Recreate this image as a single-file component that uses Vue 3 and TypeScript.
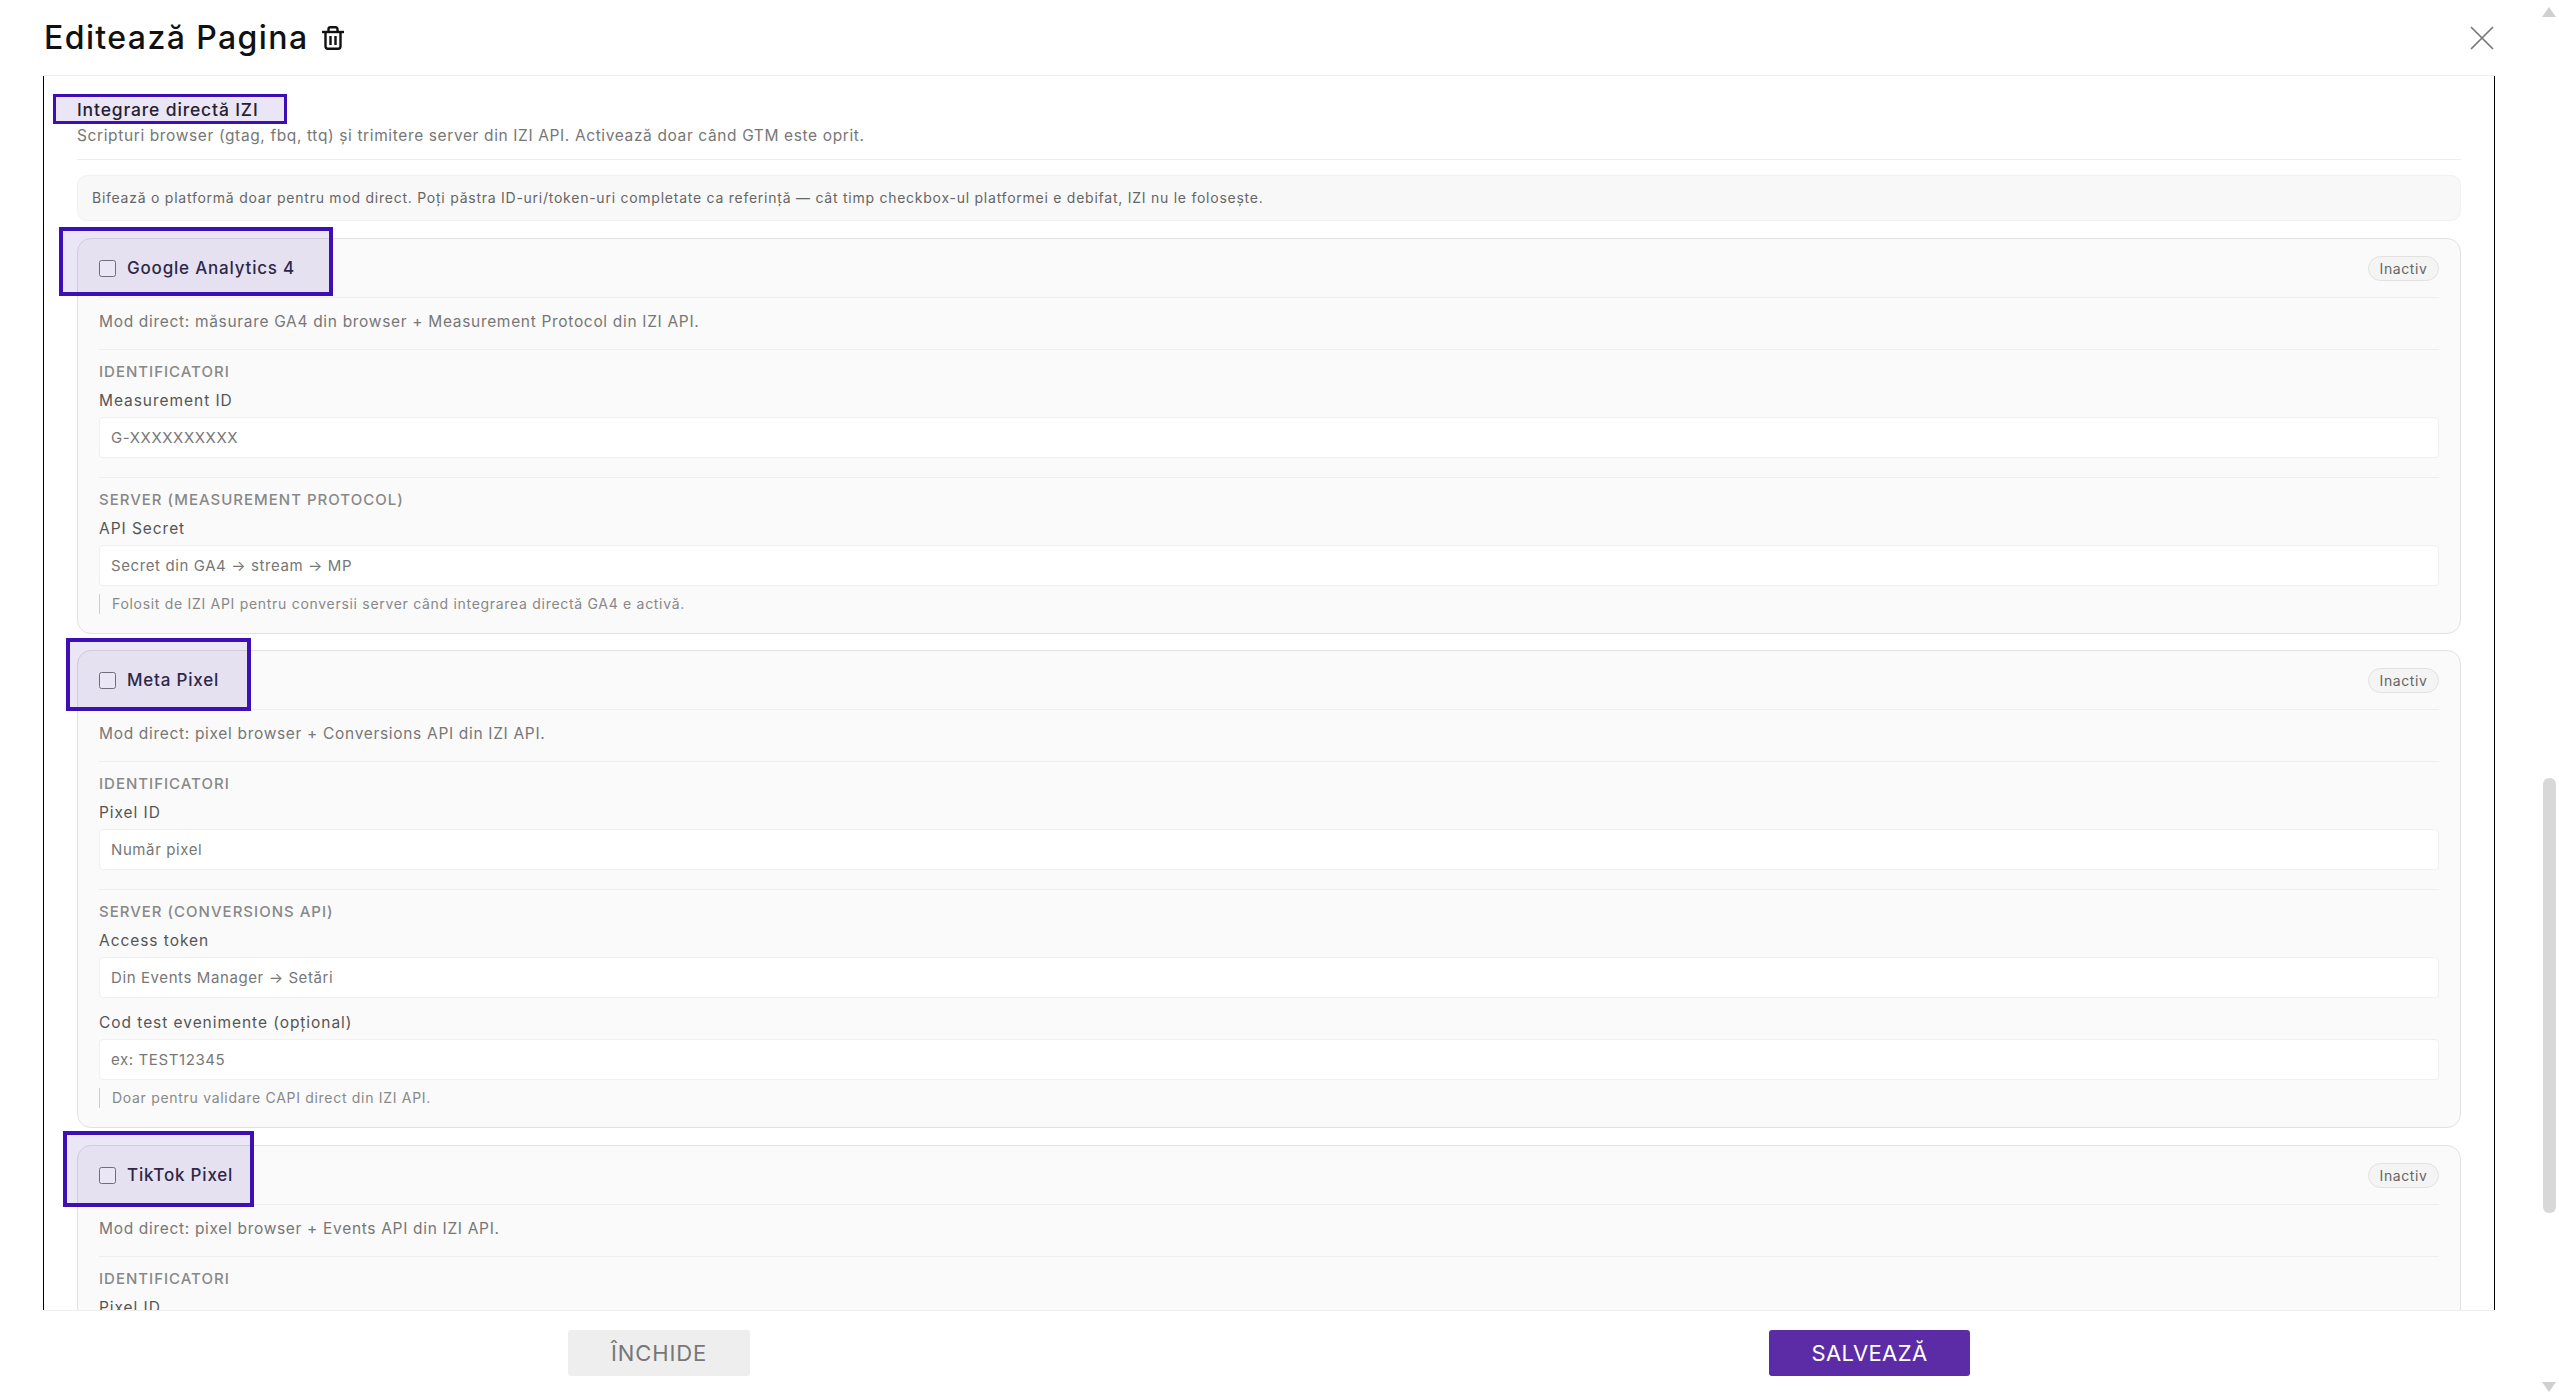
<template>
  <div class="page">
    <div class="modal">
      <header class="modal-head">
        <h1 class="modal-title">Editează Pagina</h1>
        <svg class="trash" viewBox="0 0 22 24" width="22" height="24" fill="none" stroke="#111" stroke-width="2.4">
          <path d="M0 6h22" />
          <path d="M6.5 6V3a1.8 1.8 0 0 1 1.8-1.8h5.4A1.8 1.8 0 0 1 15.5 3v3" />
          <path d="M3.5 6v14.3a2.5 2.5 0 0 0 2.5 2.5h10a2.5 2.5 0 0 0 2.5-2.5V6" />
          <path d="M8.5 10v9M13.5 10v9" />
        </svg>
        <svg class="close" viewBox="0 0 24 24" width="24" height="24">
          <path d="M1 1l22 22M23 1L1 23" stroke="#777" stroke-width="1.7" fill="none" />
        </svg>
      </header>

      <div class="modal-body">
        <div class="intro">
          <div class="intro-title">
            Integrare directă IZI
            <span class="mark mark-title"></span>
          </div>
          <div class="intro-sub">Scripturi browser (gtag, fbq, ttq) și trimitere server din IZI API. Activează doar când GTM este oprit.</div>
        </div>

        <div class="note">Bifează o platformă doar pentru mod direct. Poți păstra ID-uri/token-uri completate ca referință — cât timp checkbox-ul platformei e debifat, IZI nu le folosește.</div>

        <section v-for="card in cards" :key="card.name" class="card">
          <span class="mark" :style="card.mark"></span>
          <div class="card-head">
            <label class="check">
              <input type="checkbox" />
              <span>{{ card.name }}</span>
            </label>
            <span class="badge">Inactiv</span>
          </div>
          <p class="card-desc">{{ card.desc }}</p>
          <div v-for="group in card.groups" :key="group.title" class="group">
            <div class="group-title">{{ group.title }}</div>
            <div v-for="field in group.fields" :key="field.label" class="field">
              <label>{{ field.label }}</label>
              <input type="text" :placeholder="field.placeholder" />
            </div>
            <div v-if="group.hint" class="hint">{{ group.hint }}</div>
          </div>
        </section>
      </div>

      <footer class="modal-foot">
        <button class="btn btn-close">ÎNCHIDE</button>
        <button class="btn btn-save">SALVEAZĂ</button>
      </footer>
    </div>

    <div class="scrollbar">
      <span class="arrow-up"></span>
      <span class="thumb"></span>
      <span class="arrow-down"></span>
    </div>
  </div>
</template>

<script setup lang="ts">
interface Field {
  label: string;
  placeholder: string;
}

interface Group {
  title: string;
  fields: Field[];
  hint?: string;
}

interface Card {
  name: string;
  desc: string;
  mark: Record<string, string>;
  groups: Group[];
}

const markBox = (left: number, top: number, width: number, height: number) => ({
  left: `${left}px`,
  top: `${top}px`,
  width: `${width}px`,
  height: `${height}px`,
});

const cards: Card[] = [
  {
    name: 'Google Analytics 4',
    desc: 'Mod direct: măsurare GA4 din browser + Measurement Protocol din IZI API.',
    mark: markBox(-19, -12, 274, 69),
    groups: [
      {
        title: 'IDENTIFICATORI',
        fields: [{ label: 'Measurement ID', placeholder: 'G-XXXXXXXXXX' }],
      },
      {
        title: 'SERVER (MEASUREMENT PROTOCOL)',
        fields: [{ label: 'API Secret', placeholder: 'Secret din GA4 → stream → MP' }],
        hint: 'Folosit de IZI API pentru conversii server când integrarea directă GA4 e activă.',
      },
    ],
  },
  {
    name: 'Meta Pixel',
    desc: 'Mod direct: pixel browser + Conversions API din IZI API.',
    mark: markBox(-12, -13, 185, 73),
    groups: [
      {
        title: 'IDENTIFICATORI',
        fields: [{ label: 'Pixel ID', placeholder: 'Număr pixel' }],
      },
      {
        title: 'SERVER (CONVERSIONS API)',
        fields: [
          { label: 'Access token', placeholder: 'Din Events Manager → Setări' },
          { label: 'Cod test evenimente (opțional)', placeholder: 'ex: TEST12345' },
        ],
        hint: 'Doar pentru validare CAPI direct din IZI API.',
      },
    ],
  },
  {
    name: 'TikTok Pixel',
    desc: 'Mod direct: pixel browser + Events API din IZI API.',
    mark: markBox(-15, -15, 191, 76),
    groups: [
      {
        title: 'IDENTIFICATORI',
        fields: [{ label: 'Pixel ID', placeholder: 'Număr pixel' }],
      },
    ],
  },
];
</script>

<style>
html,
body {
  margin: 0;
  height: 100%;
  overflow: hidden;
  background: #fff;
}
</style>

<style scoped>
.page {
  display: flex;
  height: 1396px;
  font-family: Inter, "Noto Sans", sans-serif;
  color: #333;
}

.modal {
  flex: 1;
  min-width: 0;
  display: flex;
  flex-direction: column;
  padding: 0 47px 0 43px;
}

.modal-head {
  height: 75px;
  flex: none;
  display: flex;
  align-items: center;
  border-bottom: 1px solid #eee;
}

.modal-title {
  margin: 0 0 0 1px;
  font-size: 32px;
  font-weight: 500;
  letter-spacing: 1.4px;
  color: #111;
}

.trash {
  margin-left: 14px;
}

.close {
  margin-left: auto;
  margin-right: 1px;
}

.modal-body {
  height: 1234px;
  box-sizing: border-box;
  flex: none;
  overflow: hidden;
  border-left: 1px solid #000;
  border-right: 1px solid #000;
  padding: 24px 33px 0;
}

.intro {
  border-bottom: 1px solid #eee;
  padding-bottom: 13px;
}

.intro-title {
  position: relative;
  font-size: 17.5px;
  line-height: 20px;
  font-weight: 500;
  letter-spacing: 0.85px;
  color: #222;
}

.intro-sub {
  margin-top: 6px;
  font-size: 15.5px;
  line-height: 20px;
  letter-spacing: 0.62px;
  color: #777;
}

.mark {
  position: absolute;
  box-sizing: border-box;
  border: 4px solid #3e0fb5;
  background: rgba(70, 30, 170, 0.11);
  pointer-events: none;
}

.mark-title {
  border-width: 3px;
  left: -24px;
  top: -6px;
  width: 234px;
  height: 30px;
}

.note {
  margin-top: 15px;
  height: 46px;
  box-sizing: border-box;
  padding: 0 14px 2px;
  display: flex;
  align-items: center;
  background: #f8f8f8;
  border: 1px solid #f1f1f1;
  border-radius: 10px;
  font-size: 14px;
  letter-spacing: 0.75px;
  color: #666;
}

.card {
  position: relative;
  margin-top: 17px;
  padding: 0 21px 19px;
  background: #fafafa;
  border: 1px solid #e2e2e2;
  border-radius: 14px;
}

.card:nth-of-type(2) {
  margin-top: 16px;
}

.card-head {
  height: 58px;
  display: flex;
  align-items: center;
  justify-content: space-between;
  border-bottom: 1px solid #eee;
}

.check {
  display: flex;
  align-items: center;
  gap: 11px;
  font-size: 17px;
  font-weight: 500;
  letter-spacing: 0.8px;
  color: #2a2a3a;
}

.check input {
  margin: 0;
  width: 17px;
  height: 17px;
}

.badge {
  box-sizing: border-box;
  height: 25px;
  width: 71px;
  display: flex;
  align-items: center;
  justify-content: center;
  border: 1px solid #e2e2e2;
  border-radius: 13px;
  background: #f4f4f4;
  font-size: 14px;
  letter-spacing: 0.6px;
  color: #666;
}

.card-desc {
  margin: 0;
  height: 52px;
  box-sizing: border-box;
  padding-bottom: 5px;
  display: flex;
  align-items: center;
  border-bottom: 1px solid #eee;
  font-size: 15.5px;
  letter-spacing: 0.68px;
  color: #777;
}

.group {
  padding-top: 13px;
}

.group + .group {
  border-top: 1px solid #eee;
  margin-top: 19px;
}

.group-title {
  font-size: 15px;
  line-height: 18px;
  font-weight: 500;
  letter-spacing: 1px;
  color: #888;
}

.field {
  margin-top: 15px;
}

.group-title + .field {
  margin-top: 10px;
}

.field label {
  display: block;
  font-size: 15.5px;
  line-height: 20px;
  letter-spacing: 0.95px;
  color: #555;
}

.field input {
  display: block;
  margin-top: 6px;
  width: 100%;
  height: 41px;
  box-sizing: border-box;
  padding: 0 11px;
  background: #fff;
  border: 1px solid #f0f0f0;
  border-radius: 4px;
  font-family: inherit;
  font-size: 15px;
  letter-spacing: 0.6px;
  outline: none;
}

.field input::placeholder {
  color: #777;
  opacity: 1;
}

.hint {
  margin-top: 8px;
  border-left: 1px solid #ccc;
  padding-left: 12px;
  font-size: 14px;
  line-height: 20px;
  letter-spacing: 0.7px;
  color: #888;
}

.modal-foot {
  flex: 1;
  border-top: 1px solid #eee;
  padding: 19px 0 0 525px;
  display: flex;
  align-items: flex-start;
  gap: 1019px;
}

.btn {
  height: 46px;
  border: 0;
  border-radius: 3px;
  font-family: inherit;
  font-size: 22px;
}

.btn-close {
  width: 182px;
  background: #eee;
  color: #777;
  letter-spacing: 0.9px;
}

.btn-save {
  width: 201px;
  background: #5b2ca5;
  color: #fff;
  letter-spacing: 0.4px;
}

.scrollbar {
  width: 17px;
  flex: none;
  position: relative;
}

.thumb {
  position: absolute;
  left: 1px;
  top: 778px;
  width: 13px;
  height: 435px;
  background: #d8d8d8;
  border-radius: 6px;
}

.arrow-up,
.arrow-down {
  position: absolute;
  left: 0;
  width: 0;
  height: 0;
  border-left: 7px solid transparent;
  border-right: 7px solid transparent;
}

.arrow-up {
  top: 7px;
  border-bottom: 10px solid #d0d0d0;
}

.arrow-down {
  top: 1382px;
  border-top: 10px solid #d0d0d0;
}
</style>
